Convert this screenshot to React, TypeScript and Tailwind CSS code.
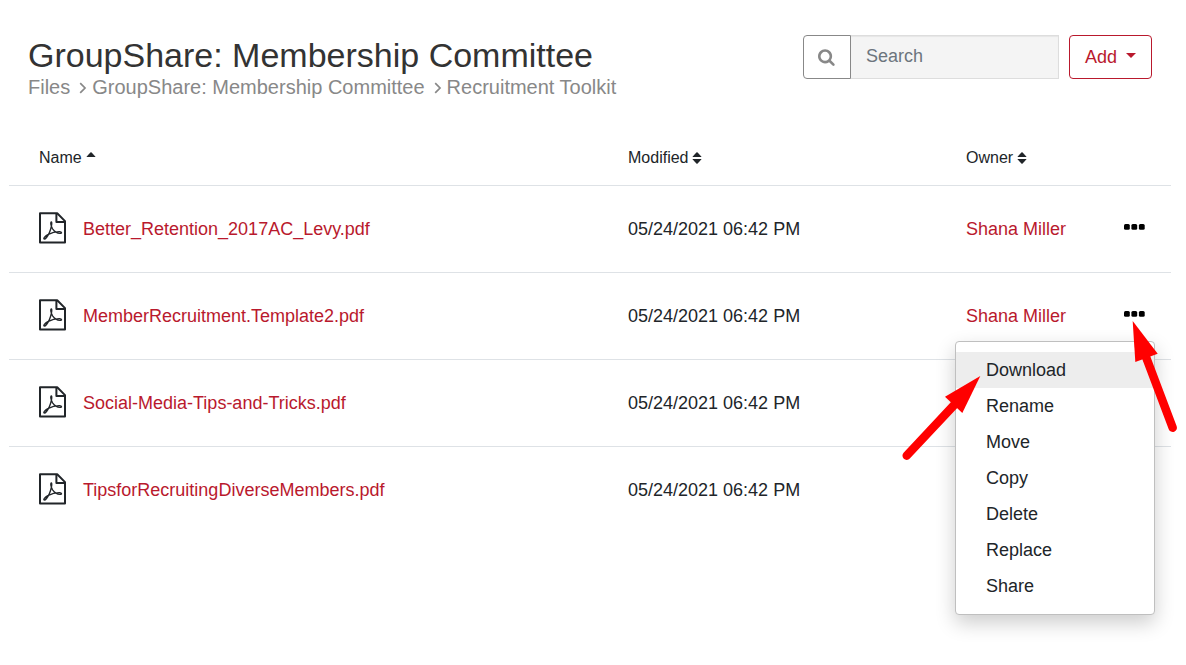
import type { ReactNode } from "react";

const files = [
  { name: "Better_Retention_2017AC_Levy.pdf", modified: "05/24/2021 06:42 PM", owner: "Shana Miller" },
  { name: "MemberRecruitment.Template2.pdf", modified: "05/24/2021 06:42 PM", owner: "Shana Miller", open: true },
  { name: "Social-Media-Tips-and-Tricks.pdf", modified: "05/24/2021 06:42 PM" },
  { name: "TipsforRecruitingDiverseMembers.pdf", modified: "05/24/2021 06:42 PM" },
];

const actions = ["Download", "Rename", "Move", "Copy", "Delete", "Replace", "Share"];

function SearchIcon() {
  return (
    <svg viewBox="0 0 1792 1792" className="size-[18px]" fill="currentColor" aria-hidden="true">
      <path d="M1152 832q0-185-131.5-316.5t-316.5-131.5-316.5 131.5-131.5 316.5 131.5 316.5 316.5 131.5 316.5-131.5 131.5-316.5zm512 832q0 52-38 90t-90 38q-54 0-90-38l-343-342q-179 124-399 124-143 0-273.5-55.5t-225-150-150-225-55.5-273.5 55.5-273.5 150-225 225-150 273.5-55.5 273.5 55.5 225 150 150 225 55.5 273.5q0 220-124 399l343 343q37 37 37 90z" />
    </svg>
  );
}

function Chevron() {
  return (
    <svg viewBox="0 0 8 14" className="mt-[2px] h-[14px] w-2 shrink-0" fill="none" stroke="currentColor" strokeWidth="1.7" aria-hidden="true">
      <path d="M1.2 2.2 6 7 1.2 11.8" />
    </svg>
  );
}

function SortIcon({ both }: { both?: boolean }) {
  return (
    <svg viewBox="0 0 10 14" className="h-[14px] w-[10px]" fill="currentColor" aria-hidden="true">
      <path d="M.7 5.4 4.4 1.4Q5 .9 5.6 1.4L9.3 5.4Q9.6 6 9 6H1Q.4 6 .7 5.4Z" />
      {both && <path d="M.7 8.6 4.4 12.6Q5 13.1 5.6 12.6L9.3 8.6Q9.6 8 9 8H1Q.4 8 .7 8.6Z" />}
    </svg>
  );
}

function PdfIcon() {
  return (
    <svg viewBox="0 0 28 32" className="mb-[2px] h-8 w-7 shrink-0" fill="none" stroke="#212529" strokeLinejoin="round" aria-hidden="true">
      <path d="M1 1.3H18.2L26 9.1V30.5H1Z" strokeWidth="2" />
      <path d="M17.4 1.5V10H26" strokeWidth="2" />
      <path d="M12.4 9.8C11.2 10 11.8 14 13.6 16.8C15.4 19.4 18.4 21.2 21 21.4C23.2 21.4 23 19.8 20.6 19.7C16.8 19.6 12 21 8.8 22.6C6 24.2 4.2 26.4 5 27C6.2 27.4 8.8 24 10.4 20.6C12 17 13.6 10.2 12.4 9.8Z" strokeWidth="1.3" />
    </svg>
  );
}

function ActionMenu() {
  return (
    <ul className="absolute top-[31px] right-[-10px] z-10 w-[200px] rounded border border-[#bfbfbf] bg-white py-[10px] text-[#212529] shadow-[0_8px_20px_rgba(0,0,0,0.2)]">
      {actions.map((a) => (
        <li key={a}>
          <button
            type="button"
            className={
              a === "Download"
                ? "block h-9 w-full bg-[#ededed] px-[30px] text-left text-lg leading-9"
                : "block h-9 w-full px-[30px] text-left text-lg leading-9"
            }
          >
            {a}
          </button>
        </li>
      ))}
    </ul>
  );
}

function Pointers() {
  return (
    <svg viewBox="900 316 280 150" className="pointer-events-none absolute top-[6px] right-[-35px] z-20 h-[150px] w-[280px] max-w-none" fill="#ff0000" stroke="#ff0000" aria-hidden="true">
      <path d="M906.7 455.7 956 403" strokeWidth="8.5" strokeLinecap="round" />
      <path d="M980.3 376 945 396.7 962.3 413Z" stroke="none" />
      <path d="M1172.7 427.7 1146 357" strokeWidth="8.5" strokeLinecap="round" />
      <path d="M1132.7 321 1157.7 353.7 1135.3 362Z" stroke="none" />
    </svg>
  );
}

function HeadCell({ className, both, children }: { className: string; both?: boolean; children: ReactNode }) {
  return (
    <th scope="col" className={className}>
      <button type="button" className="flex items-center gap-1">
        {children}
        <SortIcon both={both} />
      </button>
    </th>
  );
}

export default function App() {
  return (
    <main className="min-h-screen bg-white pt-[35px] font-['Liberation_Sans',Arial,sans-serif] text-lg text-[#212529]">
      <header className="flex items-start justify-between pr-[34px] pl-7">
        <div>
          <h1 className="text-[34px] leading-10 text-[#333]">GroupShare: Membership Committee</h1>
          <nav aria-label="Breadcrumb" className="flex items-center gap-[5px] text-xl leading-6 text-[#888]">
            <a href="#files" className="mr-1">Files</a>
            <Chevron />
            <a href="#committee" className="mr-1">GroupShare: Membership Committee</a>
            <Chevron />
            <a href="#toolkit">Recruitment Toolkit</a>
          </nav>
        </div>
        <div className="flex gap-[10px]">
          <form className="flex" role="search">
            <button type="button" aria-label="Search" className="flex h-11 w-12 items-center justify-center rounded-l border border-[#888] text-[#888]">
              <SearchIcon />
            </button>
            <input
              type="text"
              aria-label="Search"
              placeholder="Search"
              className="h-11 w-52 border border-l-0 border-[#ddd] bg-[#f4f4f4] pr-4 pb-[2px] pl-[15px] shadow-[inset_0_1px_1px_rgba(0,0,0,0.06)] placeholder:text-[#6c757d]"
            />
          </form>
          <button type="button" className="flex h-11 items-center gap-[9px] rounded border border-[#b9192d] px-[15px] text-[#b9192d]">
            Add
            <svg viewBox="0 0 10 5" className="mb-1 h-[5px] w-[10px]" fill="currentColor" aria-hidden="true">
              <path d="M0 0H10L5 5Z" />
            </svg>
          </button>
        </div>
      </header>

      <div className="mt-[30px] mr-[15px] ml-[9px]">
        <table className="w-full table-fixed border-collapse text-left">
          <thead>
            <tr className="h-14 text-base leading-6 [&_th]:pt-[3px] [&_th]:font-normal">
              <HeadCell className="pl-[30px]">Name</HeadCell>
              <HeadCell both className="w-[368px] pl-[30px]">Modified</HeadCell>
              <HeadCell both className="w-[128px]">Owner</HeadCell>
              <th scope="col" className="w-[77px]" aria-label="Actions" />
            </tr>
          </thead>
          <tbody>
            {files.map((f) => (
              <tr key={f.name} className="h-[87px] border-t border-[#dee2e6]">
                <td className="pl-[30px]">
                  <a href="#file" className="flex items-center gap-4 text-[#b9192d]">
                    <PdfIcon />
                    {f.name}
                  </a>
                </td>
                <td className="pl-[30px]">{f.modified}</td>
                <td className="whitespace-nowrap">
                  {f.owner && <a href="#owner" className="text-[#b9192d]">{f.owner}</a>}
                </td>
                <td className="pb-1">
                  <div className="relative ml-[30px] w-[21px]">
                    <button type="button" aria-label={"Actions for " + f.name} className="flex h-2 w-[21px] items-center">
                      <svg viewBox="0 0 21 6" className="h-[6px] w-[21px]" fill="#000" aria-hidden="true">
                        <rect x="0" y="0" width="5.8" height="5.8" rx="1.5" />
                        <rect x="7.4" y="0" width="5.8" height="5.8" rx="1.5" />
                        <rect x="14.9" y="0" width="5.8" height="5.8" rx="1.5" />
                      </svg>
                    </button>
                    {f.open && <ActionMenu />}
                    {f.open && <Pointers />}
                  </div>
                </td>
              </tr>
            ))}
          </tbody>
        </table>
      </div>
    </main>
  );
}
